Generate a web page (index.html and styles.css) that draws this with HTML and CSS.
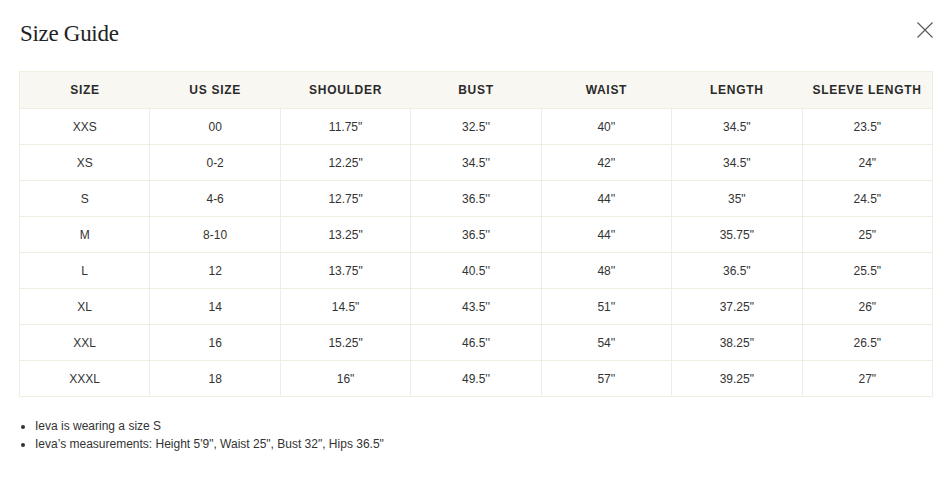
FILE: index.html
```html
<!DOCTYPE html>
<html>
<head>
<meta charset="utf-8">
<link rel="stylesheet" href="styles.css">
</head>
<body>
<div class="modal">
  <div class="head">
    <h1 class="title">Size Guide</h1>
    <button class="close" aria-label="Close">
      <svg width="16" height="16" viewBox="0 0 16 16"><path d="M0.5 0.5L15.5 15.5M15.5 0.5L0.5 15.5" stroke="#555" stroke-width="1.1" fill="none"/></svg>
    </button>
  </div>
  <table class="sizes">
    <thead>
      <tr><th>SIZE</th><th>US SIZE</th><th>SHOULDER</th><th>BUST</th><th>WAIST</th><th>LENGTH</th><th>SLEEVE LENGTH</th></tr>
    </thead>
    <tbody>
      <tr><td>XXS</td><td>00</td><td>11.75"</td><td>32.5''</td><td>40''</td><td>34.5"</td><td>23.5"</td></tr>
      <tr><td>XS</td><td>0-2</td><td>12.25"</td><td>34.5''</td><td>42''</td><td>34.5"</td><td>24"</td></tr>
      <tr><td>S</td><td>4-6</td><td>12.75"</td><td>36.5''</td><td>44''</td><td>35"</td><td>24.5"</td></tr>
      <tr><td>M</td><td>8-10</td><td>13.25"</td><td>36.5''</td><td>44''</td><td>35.75"</td><td>25"</td></tr>
      <tr><td>L</td><td>12</td><td>13.75"</td><td>40.5''</td><td>48''</td><td>36.5"</td><td>25.5"</td></tr>
      <tr><td>XL</td><td>14</td><td>14.5"</td><td>43.5''</td><td>51''</td><td>37.25"</td><td>26"</td></tr>
      <tr><td>XXL</td><td>16</td><td>15.25"</td><td>46.5''</td><td>54''</td><td>38.25"</td><td>26.5"</td></tr>
      <tr><td>XXXL</td><td>18</td><td>16"</td><td>49.5''</td><td>57''</td><td>39.25"</td><td>27"</td></tr>
    </tbody>
  </table>
  <ul class="notes">
    <li>Ieva is wearing a size S</li>
    <li>Ieva’s measurements: Height 5'9", Waist 25", Bust 32", Hips 36.5"</li>
  </ul>
</div>
</body>
</html>
```

FILE: styles.css
```css
html, body {
  margin: 0;
  background: #fff;
}
.modal {
  padding: 0 15px 0 19px;
  font-family: "Liberation Sans", Arial, sans-serif;
  color: #333;
}
.head {
  display: flex;
  justify-content: space-between;
  align-items: flex-start;
  height: 71px;
}
.title {
  margin: 21px 0 0 1px;
  font-family: "Liberation Serif", "Times New Roman", serif;
  font-weight: 400;
  font-size: 23px;
  line-height: 26px;
  color: #222;
  letter-spacing: -0.3px;
}
.close {
  margin-top: 22px;
  padding: 0;
  border: 0;
  background: none;
  width: 16px;
  height: 16px;
  display: block;
}
.close svg { display: block; }
.sizes {
  width: 914px;
  border-collapse: collapse;
  table-layout: fixed;
  border: 1px solid #f0ede2;
}
.sizes th {
  height: 36px;
  padding: 0;
  background: #f9f7f2;
  font-size: 12px;
  font-weight: 700;
  letter-spacing: 0.7px;
  color: #2a2a2a;
  text-align: center;
  border: 0;
}
.sizes td {
  height: 35px;
  padding: 0;
  font-size: 12px;
  color: #333;
  text-align: center;
  border: 1px solid #f0ede2;
}
.notes {
  margin: 20px 0 0;
  padding-left: 16px;
  font-size: 12px;
  line-height: 18px;
  color: #333;
}
```
